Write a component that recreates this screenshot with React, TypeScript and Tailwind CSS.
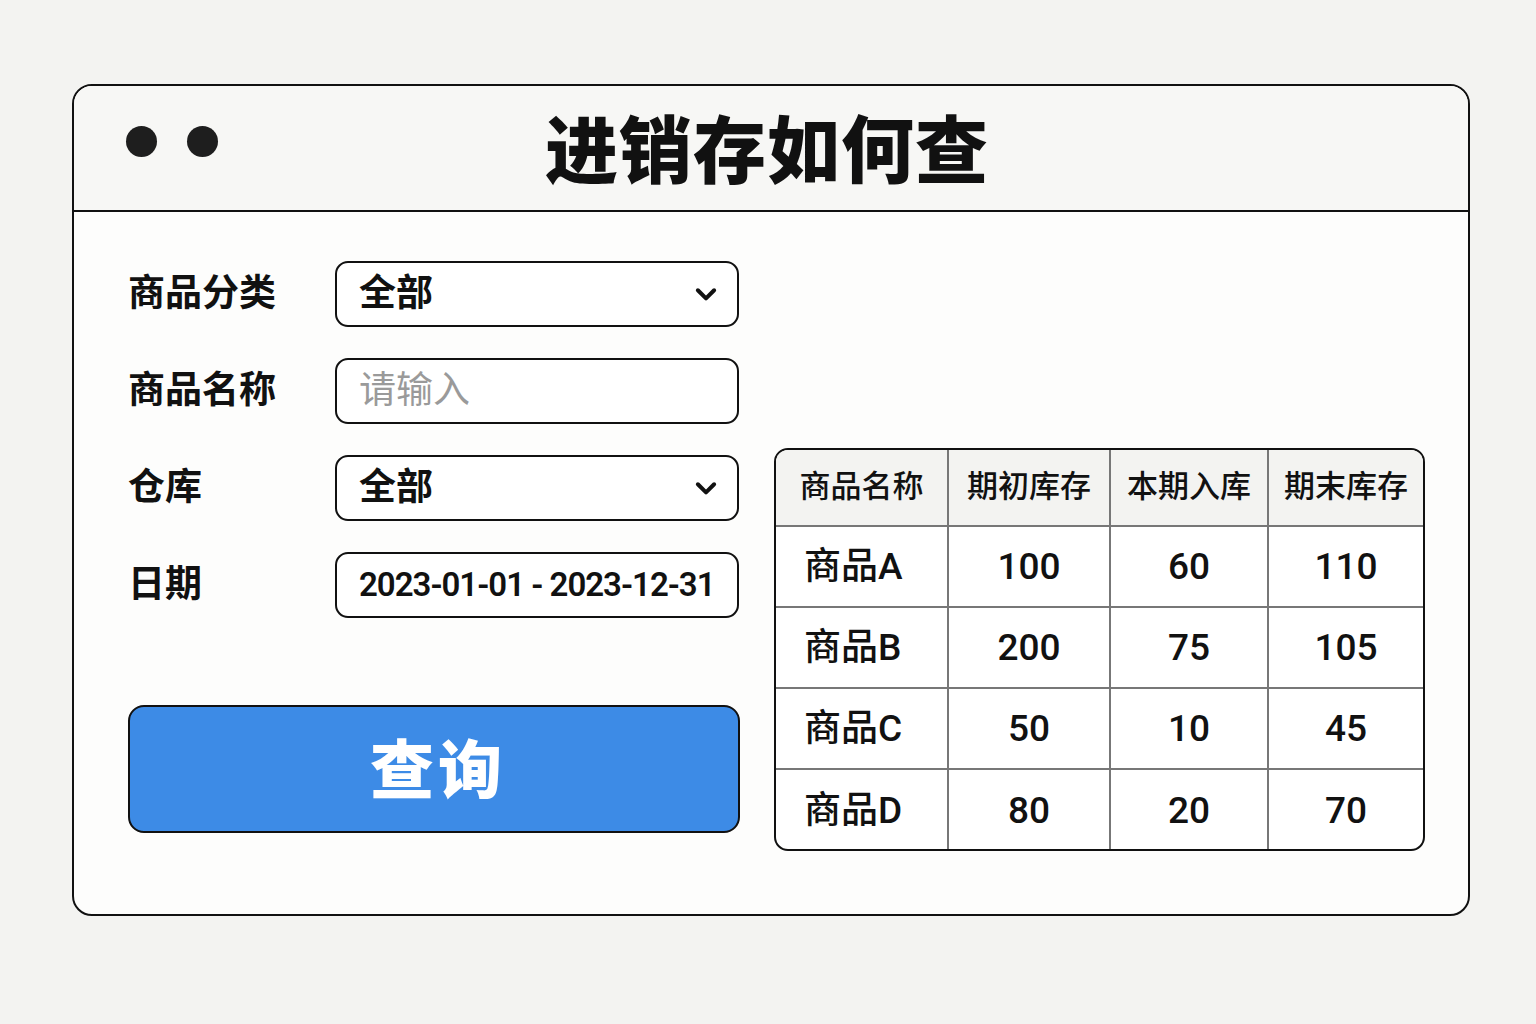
import React from 'react';

const rows = [
  ['商品A', '100', '60', '110'],
  ['商品B', '200', '75', '105'],
  ['商品C', '50', '10', '45'],
  ['商品D', '80', '20', '70'],
];

const heads = ['商品名称', '期初库存', '本期入库', '期末库存'];
const cols = 'grid grid-cols-[173px_162px_158px_1fr]';

const Chevron = () => (
  <svg width="30" height="30" viewBox="0 0 24 24" fill="none" stroke="#111" strokeWidth="3.2" strokeLinecap="round" strokeLinejoin="round">
    <path d="M5.5 9l6.5 6.5 6.5-6.5" />
  </svg>
);

const Field = ({ label, children }: { label: string; children: React.ReactNode }) => (
  <div className="flex items-center h-[66px]">
    <div className="w-[207px] text-[37px] font-semibold text-[#111]">{label}</div>
    <div className="w-[404px] h-[66px] rounded-[13px] border-2 border-[#111] bg-white flex items-center pl-[22px] pr-[16px]">
      {children}
    </div>
  </div>
);

const App = () => {
  return (
    <div
      className="w-[1536px] h-[1024px] bg-[#f3f3f1] pt-[84px] pl-[72px]"
      style={{ fontFamily: '"Roboto", "Noto Sans CJK SC", sans-serif' }}
    >
      <div className="w-[1398px] h-[832px] rounded-[20px] border-2 border-[#111] bg-[#fdfdfc] overflow-hidden flex flex-col">
        <div className="h-[126px] bg-[#f7f7f5] border-b-2 border-[#111] flex items-center relative">
          <div className="flex gap-[30px] pl-[52px] pb-[14px]">
            <div className="w-[31px] h-[31px] rounded-full bg-[#1e1e1e]" />
            <div className="w-[31px] h-[31px] rounded-full bg-[#1e1e1e]" />
          </div>
          <h1 className="absolute left-0 right-[8px] text-center text-[73px] font-black text-[#111] leading-none tracking-[1px] top-[30px]">
            进销存如何查
          </h1>
        </div>

        <div className="flex pl-[54px] pt-[49px]">
          <div className="flex flex-col">
            <div className="flex flex-col gap-[31px]">
              <Field label="商品分类">
                <span className="flex-1 text-[37px] font-semibold text-[#111]">全部</span>
                <Chevron />
              </Field>
              <Field label="商品名称">
                <span className="flex-1 text-[37px] text-[#9a9a9a]">请输入</span>
              </Field>
              <Field label="仓库">
                <span className="flex-1 text-[37px] font-semibold text-[#111]">全部</span>
                <Chevron />
              </Field>
              <Field label="日期">
                <span className="flex-1 whitespace-nowrap text-[33px] font-semibold text-[#111] tracking-[-1px]">2023-01-01 - 2023-12-31</span>
              </Field>
            </div>
            <button className="mt-[87px] w-[612px] h-[128px] pt-[6px] pl-[8px] rounded-[16px] border-2 border-[#111] bg-[#3d8be6] text-white text-[64px] font-black tracking-[4px]">
              查询
            </button>
          </div>

          <div className="ml-[34px] mt-[187px] w-[651px] h-[403px] rounded-[14px] border-2 border-[#111] bg-white overflow-hidden">
            <div className={`${cols} h-[77px] bg-[#f3f3f1] border-b-2 border-[#777]`}>
              {heads.map((h, i) => (
                <div
                  key={h}
                  className={`flex items-center justify-center text-[31px] font-medium text-[#111] ${i < 3 ? 'border-r-2 border-[#777]' : ''}`}
                >
                  {h}
                </div>
              ))}
            </div>
            {rows.map((r, ri) => (
              <div key={r[0]} className={`${cols} h-[81px] ${ri < 3 ? 'border-b-2 border-[#777]' : ''}`}>
                {r.map((c, i) => (
                  <div
                    key={i}
                    className={`flex items-center text-[37px] font-medium text-[#111] ${i === 0 ? 'pl-[28px]' : 'justify-center'} ${i < 3 ? 'border-r-2 border-[#777]' : ''}`}
                  >
                    {c}
                  </div>
                ))}
              </div>
            ))}
          </div>
        </div>
      </div>
    </div>
  );
};

export default App;
